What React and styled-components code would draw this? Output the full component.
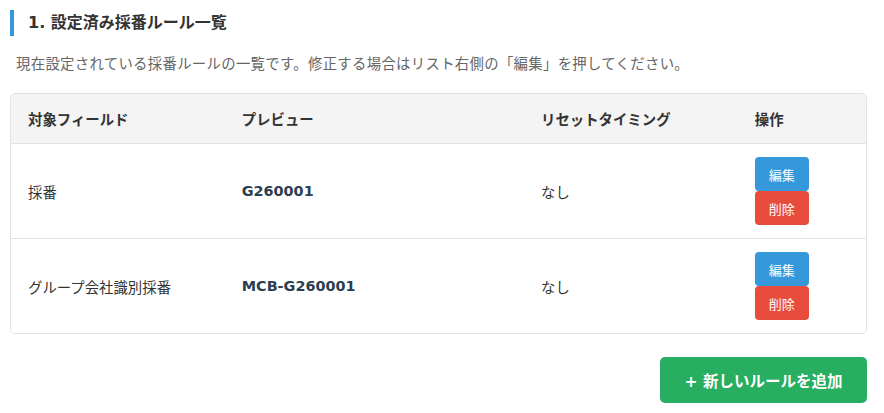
import React from 'react'
import styled, { createGlobalStyle } from 'styled-components'

const GlobalStyle = createGlobalStyle`
  body {
    margin: 0;
    background: #ffffff;
    font-family: "DejaVu Sans", "Noto Sans CJK JP", sans-serif;
    color: #333;
  }
`

const Page = styled.div`
  padding: 10px 17px 10px 10px;
`

const Title = styled.h2`
  margin: 0;
  height: 26px;
  line-height: 26px;
  border-left: 4px solid #3498db;
  padding-left: 14px;
  font-size: 16px;
  font-weight: bold;
  color: #333;
`

const Description = styled.p`
  margin: 18px 0 0;
  padding-left: 6px;
  font-size: 14.4px;
  letter-spacing: 0.3px;
  line-height: 20px;
  color: #666;
`

const Table = styled.div`
  margin-top: 19px;
  border: 1px solid #e2e2e2;
  border-radius: 5px;
  overflow: hidden;
`

const Row = styled.div`
  display: grid;
  grid-template-columns: 25% 35% 25% 15%;
  align-items: center;
  height: ${p => (p.$head ? '49px' : '94px')};
  background: ${p => (p.$head ? '#f4f4f4' : '#fff')};
  border-bottom: ${p => (p.$last ? 'none' : '1px solid #e2e2e2')};
`

const Cell = styled.div`
  padding: 0 17px;
  font-size: 14.4px;
  font-weight: ${p => (p.$bold ? 'bold' : 'normal')};
  color: ${p => (p.$code ? '#2c3e50' : '#333')};
`

const Actions = styled.div`
  padding: 0 17px;
  display: flex;
  flex-direction: column;
  align-items: flex-start;
`

const SmallButton = styled.button`
  width: 54px;
  height: 34px;
  border: none;
  border-radius: 4px;
  background: ${p => (p.$danger ? '#e74c3c' : '#3498db')};
  color: #fff;
  font-family: inherit;
  font-size: 13px;
  cursor: pointer;
  padding: 0;
`

const Footer = styled.div`
  display: flex;
  justify-content: flex-end;
  margin-top: 23px;
`

const AddButton = styled.button`
  width: 207px;
  height: 46px;
  border: none;
  border-radius: 5px;
  background: #27ae60;
  color: #fff;
  font-family: inherit;
  font-size: 15.5px;
  font-weight: bold;
  cursor: pointer;
`

const rules = [
  { field: '採番', preview: 'G260001', reset: 'なし' },
  { field: 'グループ会社識別採番', preview: 'MCB-G260001', reset: 'なし' },
]

const App = () => (
  <Page>
    <GlobalStyle />
    <Title>1. 設定済み採番ルール一覧</Title>
    <Description>
      現在設定されている採番ルールの一覧です。修正する場合はリスト右側の「編集」を押してください。
    </Description>
    <Table>
      <Row $head>
        <Cell $bold>対象フィールド</Cell>
        <Cell $bold>プレビュー</Cell>
        <Cell $bold>リセットタイミング</Cell>
        <Cell $bold>操作</Cell>
      </Row>
      {rules.map((r, i) => (
        <Row key={r.field} $last={i === rules.length - 1}>
          <Cell>{r.field}</Cell>
          <Cell $bold $code>{r.preview}</Cell>
          <Cell>{r.reset}</Cell>
          <Actions>
            <SmallButton>編集</SmallButton>
            <SmallButton $danger>削除</SmallButton>
          </Actions>
        </Row>
      ))}
    </Table>
    <Footer>
      <AddButton>+ 新しいルールを追加</AddButton>
    </Footer>
  </Page>
)

export default App
